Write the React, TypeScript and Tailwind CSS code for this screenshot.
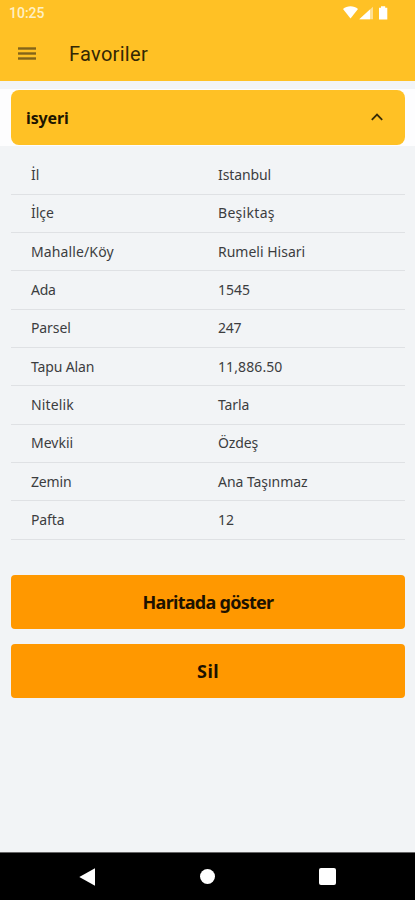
const rows = [
  { label: 'İl', labelStyle: 'tracking-normal', value: 'Istanbul', valueStyle: 'tracking-[-0.1px]' },
  { label: 'İlçe', labelStyle: 'tracking-normal', value: 'Beşiktaş', valueStyle: 'tracking-[0.3px]' },
  { label: 'Mahalle/Köy', labelStyle: 'tracking-[0.12px]', value: 'Rumeli Hisari', valueStyle: 'tracking-normal' },
  { label: 'Ada', labelStyle: 'tracking-[-0.3px]', value: '1545', valueStyle: 'tracking-normal' },
  { label: 'Parsel', labelStyle: 'tracking-[-0.1px]', value: '247', valueStyle: 'tracking-[-0.2px]' },
  { label: 'Tapu Alan', labelStyle: 'tracking-[-0.15px]', value: '11,886.50', valueStyle: 'tracking-[0.1px]' },
  { label: 'Nitelik', labelStyle: 'tracking-[0.15px]', value: 'Tarla', valueStyle: 'tracking-[-0.1px]' },
  { label: 'Mevkii', labelStyle: 'tracking-normal', value: 'Özdeş', valueStyle: 'tracking-[-0.1px]' },
  { label: 'Zemin', labelStyle: 'tracking-[-0.15px]', value: 'Ana Taşınmaz', valueStyle: 'tracking-[-0.05px]' },
  { label: 'Pafta', labelStyle: 'tracking-[-0.1px]', value: '12', valueStyle: 'tracking-normal' },
];

function StatusBar() {
  return (
    <div className="flex h-[27px] items-center justify-between pl-[9px] pr-[27px] text-white">
      <span className="mt-[-2px] font-['Roboto',sans-serif] text-[14px] font-medium leading-none text-[#fff0c4]">10:25</span>
      <svg width="46" height="16" viewBox="0 0 46 16" fill="currentColor" className="mt-[-2px]">
        <path d="M1 4C5 .2 12 .2 16 4L8.5 13.5Z" />
        <path d="M17.3 14.2L31 1.8V14.2Z" opacity=".5" />
        <path d="M17.3 14.2L28 4.5V14.2Z" />
        <path d="M37 2.8H39V1.2H43.2V2.8H45.3V14.6H37Z" />
      </svg>
    </div>
  );
}

function AppBar() {
  return (
    <div className="flex h-[54px] items-center pl-[18px]">
      <svg width="18" height="13" viewBox="0 0 18 13" fill="#846419" className="mt-[-1px]">
        <rect y="0.3" width="18" height="2.4" />
        <rect y="5.3" width="18" height="2.4" />
        <rect y="10.3" width="18" height="2.4" />
      </svg>
      <h1 className="ml-[33px] font-['Roboto',sans-serif] text-[20px] leading-6 tracking-[0.3px] text-[#332704]">Favoriler</h1>
    </div>
  );
}

function ActionButton({ children, spacing }: { children: string; spacing: string }) {
  return (
    <button className={`h-[54px] w-full rounded-[4px] bg-[#ff9800] text-[18px] font-bold leading-6 text-[#1c1200] ${spacing}`}>
      {children}
    </button>
  );
}

export default function App() {
  return (
    <div className="flex h-[900px] w-[415px] flex-col overflow-hidden bg-[#f2f4f6] font-['Noto_Sans','Open_Sans',sans-serif]">
      <header className="h-[81px] shrink-0 bg-[#ffc125]">
        <StatusBar />
        <AppBar />
      </header>
      <main className="flex-1 pt-2">
        <div className="h-[57px] bg-[#fdfdfe] pl-[11px] pr-[10px] pt-px">
          <div className="flex h-[55px] items-center justify-between rounded-[8px] bg-[#ffc125] pl-[15px] pr-[22px]">
            <span className="text-[16px] font-bold tracking-[-0.15px] text-[#1c1500]">isyeri</span>
            <svg width="12" height="8" viewBox="0 0 12 8" fill="none" stroke="#392c08" strokeWidth="1.8" className="mt-[-2px]">
              <path d="M.8 6.8L6 1.6L11.2 6.8" />
            </svg>
          </div>
        </div>
        <div className="ml-[11px] mr-[10px] pt-[10.3px]">
          {rows.map((row) => (
            <div key={row.label} className="flex h-[38.35px] items-center border-b border-[#dfe1e4] pl-5 text-[14px] leading-5 text-[#3c3d3f]">
              <span className={`w-[187px] ${row.labelStyle}`}>{row.label}</span>
              <span className={row.valueStyle}>{row.value}</span>
            </div>
          ))}
        </div>
        <div className="ml-[11px] mr-[10px] mt-[35px] flex flex-col gap-[15px]">
          <ActionButton spacing="tracking-[-0.72px]">Haritada göster</ActionButton>
          <ActionButton spacing="tracking-[0.4px]">Sil</ActionButton>
        </div>
      </main>
      <nav className="flex h-12 shrink-0 items-center justify-between border-t border-[#666] bg-black px-[79px] text-white">
        <svg width="17" height="18" viewBox="0 0 17 18" fill="currentColor"><path d="M.3 9L16 .3V17.7Z" /></svg>
        <span className="size-[15px] rounded-full bg-white" />
        <span className="size-[17px] rounded-[2px] bg-white" />
      </nav>
    </div>
  );
}
